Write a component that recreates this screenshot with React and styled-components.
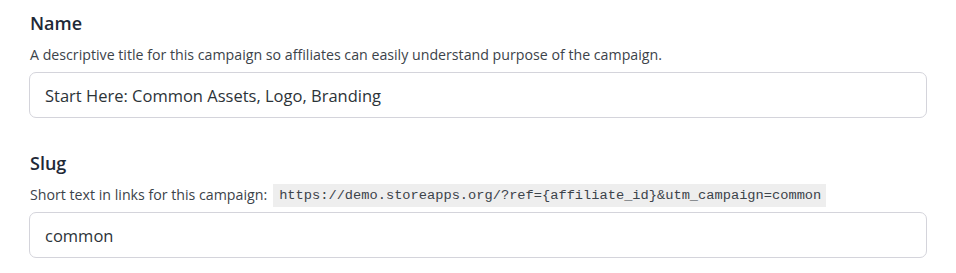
import React from 'react';
import styled, { createGlobalStyle } from 'styled-components';

const GlobalStyle = createGlobalStyle`
  html, body {
    margin: 0;
    padding: 0;
    background: #fff;
  }
  body {
    font-family: "Open Sans", "Noto Sans", sans-serif;
    color: #3c434a;
  }
`;

const Form = styled.div`
  width: 956px;
  height: 273px;
  box-sizing: border-box;
  padding: 10px 29px 0 29px;
  display: flex;
  flex-direction: column;
  gap: 32px;
`;

const Field = styled.div`
  display: flex;
  flex-direction: column;
`;

const Label = styled.label`
  font-size: 18px;
  font-weight: 600;
  color: #1f2937;
  line-height: 26px;
  padding-left: 1px;
`;

const Help = styled.p`
  margin: 9px 0 0;
  padding-left: 1px;
  font-size: 14.2px;
  line-height: 20px;
  height: 20px;
  color: #3c434a;
  display: flex;
  align-items: center;
  gap: 6px;
`;

const Code = styled.code`
  font-family: "Liberation Mono", "DejaVu Sans Mono", monospace;
  font-size: 13.7px;
  background: #eeeeee;
  color: #3c434a;
  padding: 2px 5px 2px 6px;
  line-height: 19px;
`;

const Input = styled.input`
  margin-top: 7px;
  width: 100%;
  box-sizing: border-box;
  height: 46px;
  border: 1px solid #d4d4db;
  border-radius: 7px;
  padding: 0 15px;
  font-family: "Open Sans", "Noto Sans", sans-serif;
  font-size: 16.5px;
  color: #2c3338;
  background: #fff;
  outline: none;
`;

export default function App() {
  return (
    <>
      <GlobalStyle />
      <Form>
        <Field>
          <Label>Name</Label>
          <Help>
            A descriptive title for this campaign so affiliates can easily understand purpose of the campaign.
          </Help>
          <Input defaultValue="Start Here: Common Assets, Logo, Branding" />
        </Field>
        <Field>
          <Label>Slug</Label>
          <Help>
            Short text in links for this campaign:
            <Code>https://demo.storeapps.org/?ref=&#123;affiliate_id&#125;&amp;utm_campaign=common</Code>
          </Help>
          <Input defaultValue="common" />
        </Field>
      </Form>
    </>
  );
}
